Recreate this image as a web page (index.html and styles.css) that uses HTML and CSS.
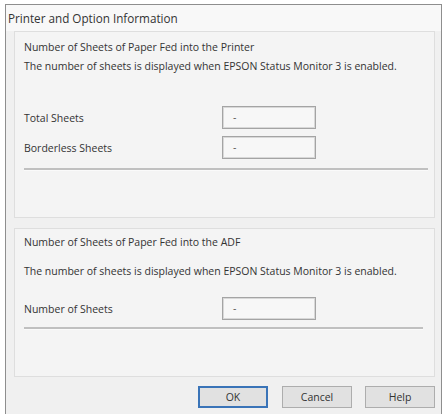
FILE: index.html
```html
<!DOCTYPE html>
<html>
<head>
<meta charset="utf-8">
<link rel="stylesheet" href="styles.css">
</head>
<body>
<div class="window">
  <div class="title">Printer and Option Information</div>
  <div class="content">
    <div class="group group-printer">
      <div class="group-title">Number of Sheets of Paper Fed into the Printer</div>
      <div class="desc">The number of sheets is displayed when EPSON Status Monitor 3 is enabled.</div>
      <div class="row row-first">
        <div class="label">Total Sheets</div>
        <div class="field">-</div>
      </div>
      <div class="row row-next">
        <div class="label">Borderless Sheets</div>
        <div class="field">-</div>
      </div>
      <div class="sep sep-printer"></div>
    </div>
    <div class="group group-adf">
      <div class="group-title">Number of Sheets of Paper Fed into the ADF</div>
      <div class="desc desc-adf">The number of sheets is displayed when EPSON Status Monitor 3 is enabled.</div>
      <div class="row row-adf">
        <div class="label">Number of Sheets</div>
        <div class="field">-</div>
      </div>
      <div class="sep sep-adf"></div>
    </div>
    <div class="buttons">
      <div class="btn btn-default">OK</div>
      <div class="btn btn-cancel">Cancel</div>
      <div class="btn btn-help">Help</div>
    </div>
  </div>
</div>
</body>
</html>
```

FILE: styles.css
```css
html, body {
  margin: 0;
  padding: 0;
  background: #ffffff;
}
body {
  font-family: "Open Sans", "Noto Sans", sans-serif;
  font-size: 10.5px;
  color: #333333;
}
.window {
  box-sizing: border-box;
  margin: 4px 0 0 5px;
  width: 437px;
  height: 410px;
  border: 1px solid #8e8e8e;
  border-bottom: none;
  background: #f0f0f0;
  display: flex;
  flex-direction: column;
}
.title {
  height: 26px;
  line-height: 26px;
  padding-left: 2px;
  font-size: 11.7px;
  background: #f8f8f8;
  white-space: nowrap;
}
.content {
  padding: 0 6px 0 8px;
  display: flex;
  flex-direction: column;
}
.group {
  box-sizing: border-box;
  border: 1px solid #dedede;
  background: #f4f4f4;
  padding-left: 9px;
  display: flex;
  flex-direction: column;
}
.group-printer {
  height: 187px;
}
.group-adf {
  height: 149px;
  margin-top: 10px;
}
.group-title, .desc {
  line-height: 18px;
  height: 18px;
  white-space: nowrap;
}
.group-printer .group-title {
  margin-top: 6px;
}
.group-adf .group-title {
  margin-top: 4px;
}
.desc {
  margin-top: 1px;
}
.desc-adf {
  margin-top: 11px;
}
.row {
  display: flex;
  align-items: center;
  height: 23px;
}
.row-first {
  margin-top: 31px;
}
.row-next {
  margin-top: 7px;
}
.row-adf {
  margin-top: 17px;
}
.label {
  width: 198px;
  white-space: nowrap;
}
.field {
  box-sizing: border-box;
  width: 94px;
  height: 23px;
  border: 1px solid #a4a4a4;
  box-shadow: inset 0 0 0 1px #d8d8d8;
  background: #f7f7f7;
  padding-left: 10px;
  line-height: 20px;
  color: #555555;
}
.sep {
  height: 2px;
  background: #c0c0c0;
  border-bottom: 1px solid #fafafa;
}
.sep-printer {
  width: 404px;
  margin-top: 9px;
}
.sep-adf {
  width: 399px;
  margin-top: 7px;
}
.buttons {
  display: flex;
  justify-content: flex-end;
  gap: 14px;
  margin-top: 9px;
}
.btn {
  box-sizing: border-box;
  width: 70px;
  height: 22px;
  border: 1px solid #adadad;
  background: #e1e1e1;
  text-align: center;
  line-height: 20px;
  color: #333333;
}
.btn-default {
  border: 2px solid #3a74b8;
  line-height: 18px;
}
.btn-help {
  margin-left: -1px;
}
```
